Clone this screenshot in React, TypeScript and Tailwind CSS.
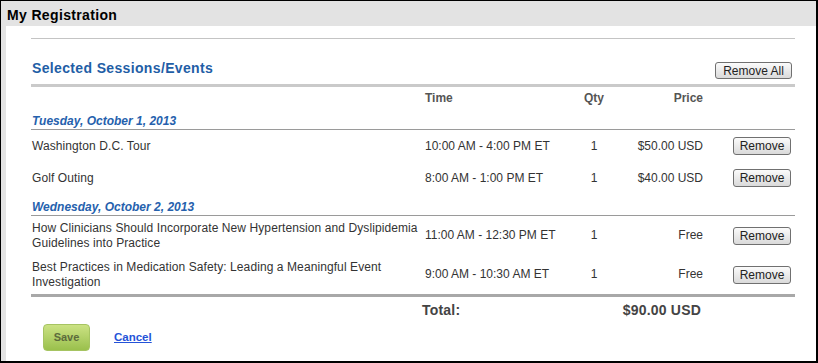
import React from "react";

const font = { fontFamily: '"Liberation Sans", Arial, sans-serif' };

function RemoveBtn({ label = "Remove", w = "w-[58px]", h = "h-[18px]" }: { label?: string; w?: string; h?: string }) {
  return (
    <button
      className={`${w} ${h} flex items-center justify-center rounded-[3px] border border-[#707070] bg-gradient-to-b from-[#fbfbfb] to-[#dadada] text-[12px] leading-none text-[#222]`}
    >
      {label}
    </button>
  );
}

type Row = { name: React.ReactNode; time: string; qty: string; price: string; h: string };

function ItemRow({ r }: { r: Row }) {
  return (
    <div className={`flex items-center ${r.h} text-[12px] leading-[15px] text-[#333]`}>
      <div className="w-[394px] pl-[1px] whitespace-nowrap tracking-[0.09px]">{r.name}</div>
      <div className="w-[149px]">{r.time}</div>
      <div className="w-[40px] text-center">{r.qty}</div>
      <div className="w-[89px] text-right">{r.price}</div>
      <div className="flex-1 flex justify-end pr-[4px]">
        <RemoveBtn />
      </div>
    </div>
  );
}

function DateRow({ label, h }: { label: string; h: string }) {
  return (
    <>
      <div className={`flex items-end ${h}`}>
        <span className="pl-[1px] text-[12px] leading-[15px] font-bold italic text-[#2561ad]">{label}</span>
      </div>
      <div className="h-px bg-[#9a9a9a]" />
    </>
  );
}

export default function App() {
  const day1: Row[] = [
    { name: "Washington D.C. Tour", time: "10:00 AM - 4:00 PM ET", qty: "1", price: "$50.00 USD", h: "h-[32px]" },
    { name: "Golf Outing", time: "8:00 AM - 1:00 PM ET", qty: "1", price: "$40.00 USD", h: "h-[32px]" },
  ];
  const day2: Row[] = [
    {
      name: (
        <>
          How Clinicians Should Incorporate New Hypertension and Dyslipidemia
          <br />
          Guidelines into Practice
        </>
      ),
      time: "11:00 AM - 12:30 PM ET",
      qty: "1",
      price: "Free",
      h: "h-[39px]",
    },
    {
      name: (
        <>
          Best Practices in Medication Safety: Leading a Meaningful Event
          <br />
          Investigation
        </>
      ),
      time: "9:00 AM - 10:30 AM ET",
      qty: "1",
      price: "Free",
      h: "h-[39px]",
    },
  ];

  return (
    <div style={font} className="w-[818px] h-[363px] flex flex-col border-l border-t border-r-2 border-b-2 border-black bg-[#e3e3e3]">
      <div className="h-[25px] shrink-0 pl-[6px] pt-[2px]">
        <span className="text-[14px] leading-[16px] font-bold tracking-[0.35px] text-black">My Registration</span>
      </div>
      <div className="flex-1 ml-[5px] bg-white pl-[25px] pr-[21px]">
        <div className="mt-[12px] h-px bg-[#c4c4c4]" />
        <div className="mt-[21px] h-[19px] flex items-start justify-between">
          <span className="pl-[1px] text-[14px] leading-[16px] font-bold tracking-[0.35px] text-[#1f5ea6]">
            Selected Sessions/Events
          </span>
          <div className="mt-[2px] mr-[3px]">
            <RemoveBtn label="Remove All" w="w-[77px]" h="h-[17px]" />
          </div>
        </div>
        <div className="mt-[5px] h-[3px] bg-[#cacaca]" />
        <div className="flex items-center h-[22px] text-[12px] leading-[15px] font-bold text-[#555]">
          <div className="w-[394px]" />
          <div className="w-[149px]">Time</div>
          <div className="w-[40px] text-center">Qty</div>
          <div className="w-[89px] text-right">Price</div>
        </div>
        <DateRow label="Tuesday, October 1, 2013" h="h-[20px]" />
        {day1.map((r, i) => (
          <ItemRow key={i} r={r} />
        ))}
        <DateRow label="Wednesday, October 2, 2013" h="h-[21px]" />
        {day2.map((r, i) => (
          <ItemRow key={i} r={r} />
        ))}
        <div className="h-[3px] bg-[#a8a8a8]" />
        <div className="flex items-center h-[26px] text-[14px] leading-[16px] font-bold text-[#444] tracking-[0.2px]">
          <div className="w-[391px]" />
          <div className="flex-1">Total:</div>
          <div className="pr-[94px]">$90.00 USD</div>
        </div>
        <div className="mt-[1px] flex items-center">
          <button className="ml-[12px] w-[47px] h-[27px] rounded-[4px] border border-[#a6c462] bg-gradient-to-b from-[#cbe283] to-[#9ac04c] text-[11px] font-bold text-[#5c6b3c]">
            Save
          </button>
          <a href="#" className="ml-[24px] text-[11.5px] font-bold text-[#2453d8] underline">
            Cancel
          </a>
        </div>
      </div>
    </div>
  );
}
